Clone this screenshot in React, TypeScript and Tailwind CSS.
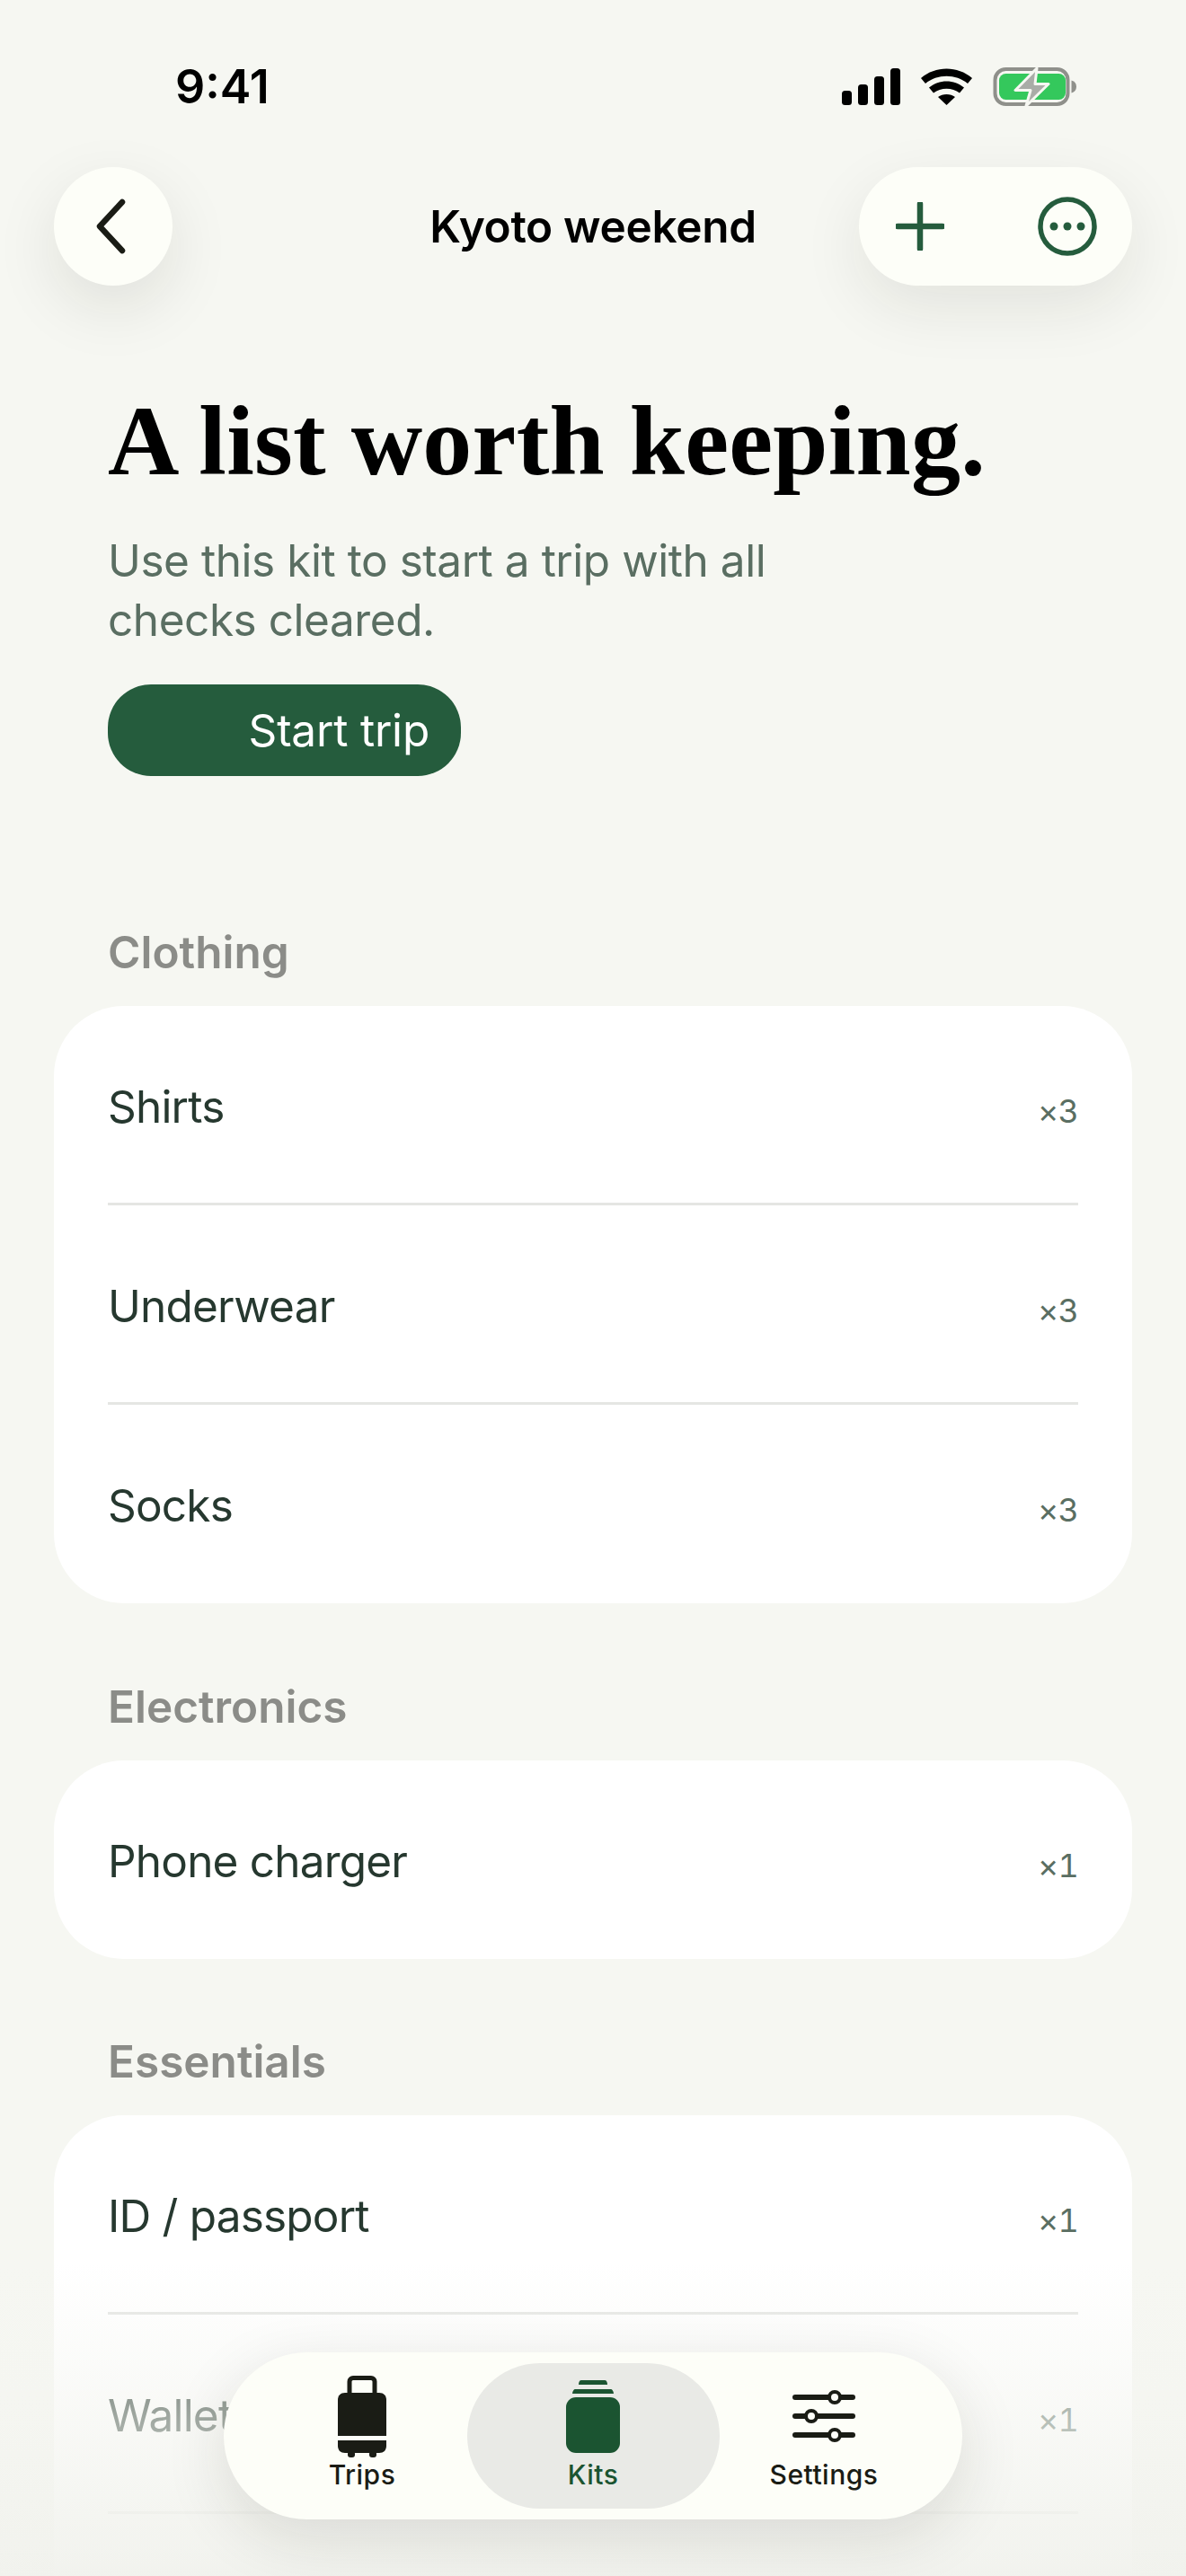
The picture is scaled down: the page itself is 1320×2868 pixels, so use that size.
const sections = [
  {
    title: 'Clothing',
    items: [
      { name: 'Shirts', qty: 3 },
      { name: 'Underwear', qty: 3 },
      { name: 'Socks', qty: 3 },
    ],
  },
  { title: 'Electronics', items: [{ name: 'Phone charger', qty: 1 }] },
  {
    title: 'Essentials',
    open: true,
    items: [
      { name: 'ID / passport', qty: 1 },
      { name: 'Wallet', qty: 1 },
    ],
  },
];

function StatusIcons() {
  return (
    <svg width="262" height="44" viewBox="0 0 262 44" fill="none">
      {/* signal */}
      <rect x="0" y="26" width="11" height="16" rx="3.5" fill="#000" />
      <rect x="18" y="19" width="11" height="23" rx="3.5" fill="#000" />
      <rect x="36" y="10" width="11" height="32" rx="3.5" fill="#000" />
      <rect x="54" y="1" width="11" height="41" rx="3.5" fill="#000" />
      {/* wifi */}
      <path d="M88 12C104 -2 129 -2 145 12L140 18C127 7 106 7 93 18Z" fill="#000" />
      <path d="M97 22.500C108 13 125 13 136 22.500L131 28.500C123 22 110 22 102 28.500Z" fill="#000" />
      <path d="M107 33C112 29 121 29 126 33L116.500 42Z" fill="#000" />
      {/* battery */}
      <rect x="170.500" y="2" width="81" height="39" rx="12" stroke="#8f908b" strokeWidth="4" />
      <rect x="175" y="7" width="74" height="29" rx="7.500" fill="#34c85c" />
      <path d="M255.500 14.500C259 15.500 261 18 261 21.500C261 25 259 27.500 255.500 28.500Z" fill="#8f908b" />
      <path
        d="M217 1L193 25.500H210L205 43L230 18.500H215Z"
        fill="#a9aca7"
        stroke="#f6f7f2"
        strokeWidth="3"
        strokeLinejoin="round"
      />
    </svg>
  );
}

function TripsIcon() {
  return (
    <svg width="56" height="92" viewBox="0 0 56 92" fill="none">
      <path d="M14 20V6.500C14 4 16 2.500 18 2.500H38C40 2.500 42 4 42 6.500V20" stroke="#1a1c15" strokeWidth="5" />
      <path d="M1 27C1 22 4 19 9 19H47C52 19 55 22 55 27V67H1Z" fill="#1a1c15" />
      <path d="M1 72H55V78C55 83 52 86 47 86H9C4 86 1 83 1 78Z" fill="#1a1c15" />
      <rect x="12" y="84" width="8" height="7" rx="3" fill="#1a1c15" />
      <rect x="36" y="84" width="8" height="7" rx="3" fill="#1a1c15" />
    </svg>
  );
}

function KitsIcon() {
  return (
    <svg width="60" height="82" viewBox="0 0 60 82" fill="none">
      <path d="M17 0H43C45 0 46 2 46 5H14C14 2 15 0 17 0Z" fill="#1b5431" />
      <path d="M10 10H50C51 10 53 12 53 15H7C7 12 9 10 10 10Z" fill="#1b5431" />
      <rect x="0" y="19" width="60" height="62" rx="11" fill="#1b5431" />
    </svg>
  );
}

function SettingsIcon() {
  return (
    <svg width="70" height="58" viewBox="0 0 70 58" fill="none">
      {[
        { y: 8, x: 47 },
        { y: 29, x: 21 },
        { y: 50, x: 47 },
      ].map((s) => (
        <g key={s.y}>
          <path d={`M3 ${s.y}H67`} stroke="#1a1c15" strokeWidth="6" strokeLinecap="round" />
          <circle cx={s.x} cy={s.y} r="6" fill="#fdfef8" stroke="#1a1c15" strokeWidth="4" />
        </g>
      ))}
    </svg>
  );
}

export default function App() {
  return (
    <div className="relative h-[2868px] w-[1320px] overflow-hidden bg-[#f6f7f2] font-['Inter',sans-serif]">
      {/* Status bar */}
      <div className="flex h-[186px] items-start justify-between pl-[195px] pr-[121px] pt-[68px]">
        <span className="text-[52px] leading-[58px] font-semibold text-black">9:41</span>
        <div className="pt-[7px]">
          <StatusIcons />
        </div>
      </div>

      {/* Nav */}
      <div className="grid h-[132px] grid-cols-[1fr_auto_1fr] items-center px-[60px]">
        <button className="flex h-[132px] w-[132px] items-center justify-center rounded-full bg-[#fdfef8] shadow-[0_24px_70px_rgba(30,30,20,0.10)]">
          <svg width="40" height="62" viewBox="0 0 40 62" fill="none" className="mr-[6px]">
            <path d="M33 4L8 31L33 58" stroke="#1a1c15" strokeWidth="6.500" strokeLinecap="round" strokeLinejoin="round" />
          </svg>
        </button>
        <h2 className="text-[49.500px] font-semibold tracking-[-0.3px] text-black">Kyoto weekend</h2>
        <div className="flex h-[132px] w-[304px] items-center gap-[104px] justify-self-end rounded-full bg-[#fdfef8] pl-[41px] shadow-[0_24px_70px_rgba(30,30,20,0.09)]">
          <svg width="54" height="54" viewBox="0 0 54 54" fill="none">
            <path d="M27 2V52M2 27H52" stroke="#255c3d" strokeWidth="6.500" strokeLinecap="round" />
          </svg>
          <svg width="66" height="66" viewBox="0 0 66 66" fill="none">
            <circle cx="33" cy="33" r="30" stroke="#255c3d" strokeWidth="5.500" />
            <circle cx="18" cy="33" r="4.500" fill="#255c3d" />
            <circle cx="33" cy="33" r="4.500" fill="#255c3d" />
            <circle cx="48" cy="33" r="4.500" fill="#255c3d" />
          </svg>
        </div>
      </div>

      {/* Hero */}
      <div className="px-[120px] pt-[115px]">
        <h1 className="font-['Liberation_Serif',serif] text-[110px] leading-[116px] font-bold tracking-[0.25px] whitespace-nowrap text-black">
          A list worth keeping.
        </h1>
        <p className="mt-[42px] w-[800px] text-[49.500px] leading-[66px] tracking-[-0.45px] text-[#5a6e62]">
          Use this kit to start a trip with all checks cleared.
        </p>
        <button className="mt-[39px] flex h-[102px] w-[393px] items-center justify-end rounded-[48px] bg-[#255c3d] pr-[35px] text-[49.500px] tracking-[-0.2px] text-white">
          Start trip
        </button>
      </div>

      {/* Sections */}
      <div className="mt-[166px]">
        {sections.map((s) => (
          <section key={s.title} className="mb-[84.500px] px-[60px]">
            <h3 className="mb-[30px] pl-[60px] text-[49.500px] leading-[60px] font-semibold text-[#8b8c88]">{s.title}</h3>
            <div className={`rounded-[78px] bg-white px-[60px] ${s.open ? 'pb-[200px]' : ''}`}>
              {s.items.map((item, i) => (
                <div
                  key={item.name}
                  className={`flex items-baseline justify-between pt-[79px] ${
                    i < s.items.length - 1 || s.open ? 'h-[222px] border-b-[3px] border-[#e5e6e3]' : 'h-[221px]'
                  }`}
                >
                  <span className="text-[49.500px] leading-[66px] tracking-[-0.8px] text-[#26382f]">{item.name}</span>
                  <span className="text-[36px] tracking-[-0.8px] tabular-nums text-[#5a6e62]">×{item.qty}</span>
                </div>
              ))}
            </div>
          </section>
        ))}
      </div>

      {/* Bottom fade */}
      <div className="absolute inset-x-0 bottom-0 h-[348px] bg-[linear-gradient(to_bottom,#f4f5f000_0%,#f4f5f099_50%,#f1f2edf5_100%)]" />

      {/* Tab bar */}
      <nav className="absolute bottom-[63px] left-[249px] flex h-[186px] w-[822px] items-center justify-center rounded-full bg-[#fdfef8] shadow-[0_20px_70px_rgba(30,30,20,0.12)]">
        <div className="flex h-[162px] w-[257px] flex-col items-center pt-[14px] text-[#1a1c15]">
          <div className="flex h-[92px] items-end">
            <TripsIcon />
          </div>
          <span className="text-[30px] leading-[36px] font-medium tracking-[0.5px]">Trips</span>
        </div>
        <div className="-mx-[12px] flex h-[162px] w-[281px] flex-col items-center rounded-[81px] bg-[#e9eae6] pt-[14px] text-[#1b5431]">
          <div className="flex h-[92px] items-end pb-[5px]">
            <KitsIcon />
          </div>
          <span className="text-[30px] leading-[36px] font-medium tracking-[0.5px]">Kits</span>
        </div>
        <div className="flex h-[162px] w-[257px] flex-col items-center pt-[14px] text-[#1a1c15]">
          <div className="flex h-[92px] items-end pb-[18px]">
            <SettingsIcon />
          </div>
          <span className="text-[30px] leading-[36px] font-medium tracking-[0.5px]">Settings</span>
        </div>
      </nav>
    </div>
  );
}
